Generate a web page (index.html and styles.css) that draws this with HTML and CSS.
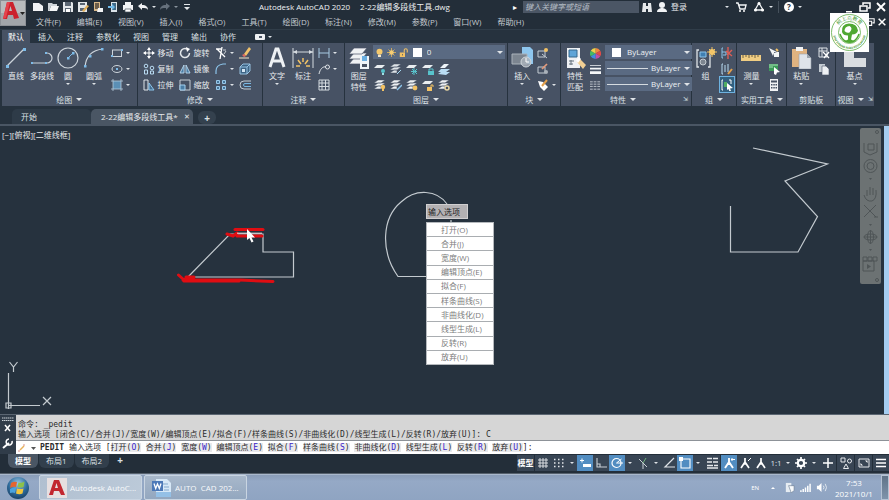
FILE: index.html
```html
<!DOCTYPE html>
<html lang="zh-CN">
<head>
<meta charset="utf-8">
<title>Autodesk AutoCAD 2020</title>
<link rel="stylesheet" href="styles.css">
</head>
<body>
<header class="top">
  <button class="app" aria-label="应用程序菜单">
    <svg width="26" height="26" viewBox="0 0 26 26"><rect width="26" height="26" fill="#8d9196"/><rect x="1" y="1" width="24" height="12" fill="#b9bcbe"/><rect x="1" y="13" width="24" height="12" fill="#a2a6aa"/><path fill-rule="evenodd" d="M3 19L7 2h6l6 16-5 1-1-4H8l-1 4zM9 11h3l-1.500-5z" fill="#cb222d"/><path d="M3 19L7 2h3L6 18z" fill="#e5434d"/><path d="M20 12h5l-2.500 3z" fill="#222"/></svg>
  </button>
  <div class="bars">
    <div class="title-bar">
      <div class="qat">
        <button aria-label="新建"><svg viewBox="0 0 12 12"><path d="M1 2h6l4 3v5H1z" fill="#f1f3f5"/></svg></button>
        <button aria-label="打开"><svg viewBox="0 0 12 12"><path d="M1 2h4l1 1h4v2H4l-2 5H1z" fill="#cfd5da"/><path d="M4 5h8l-2 5H2z" fill="#f4f6f7"/></svg></button>
        <button aria-label="保存"><svg viewBox="0 0 12 12"><path d="M1 1h9l1 1v9H1z" fill="#e3e7ea"/><path d="M3 1h6v4H3zM3 7h6v4H3z" fill="#5a6673"/><path d="M4 8h4v3H4z" fill="#fff"/></svg></button>
        <button aria-label="另存为"><svg viewBox="0 0 12 12"><path d="M1 1h9v10H1z" fill="#e3e7ea"/><path d="M3 2h5v2H3zM3 7h5v3H3z" fill="#5a6673"/><path d="M5 10l5-6 2 1-5 6z" fill="#e2b15c"/></svg></button>
        <button aria-label="从移动设备打开"><svg viewBox="0 0 12 12"><path d="M2 1h6v9H2z" fill="#d9b98a"/><path d="M3 2h4v6H3z" fill="#6c5d4a"/><path d="M6 7h5v4H5z" fill="#f1f3f5"/></svg></button>
        <button aria-label="保存到移动设备"><svg viewBox="0 0 12 12"><path d="M4 1h6v10H4z" fill="#dbe4ea"/><path d="M5 2h4v7H5z" fill="#3f6a88"/><path d="M1 5h4V3l3 3-3 3V7H1z" fill="#6fb9e8"/></svg></button>
        <button aria-label="打印"><svg viewBox="0 0 12 12"><path d="M3 1h6v3H3zM1 4h10v5H1z" fill="#f1f3f5"/><path d="M3 8h6v3H3z" fill="#fff" stroke="#47545f" stroke-width=".7"/></svg></button>
        <button aria-label="放弃"><svg viewBox="0 0 12 12"><path d="M1 5l4-3v2c4 0 6 2 6 5-1-2-3-2-6-2v2z" fill="#f1f3f5"/></svg></button>
        <i class="dd"></i>
        <button aria-label="重做"><svg viewBox="0 0 12 12"><path d="M11 5L7 2v2C3 4 1 6 1 9c1-2 3-2 6-2v2z" fill="#66717d"/></svg></button>
        <i class="dd dim"></i>
        <button aria-label="自定义快速访问"><svg viewBox="0 0 12 12"><path d="M3 3h6v1H3zM3 6h6L6 9z" fill="#e1e5e8"/></svg></button>
      </div>
      <h1><span>Autodesk AutoCAD 2020</span><span>2-22编辑多段线工具.dwg</span></h1>
      <span class="tri">▸</span>
      <input class="search" type="search" aria-label="搜索" placeholder="键入关键字或短语">
      <button class="login-icon" aria-label="查找"><svg viewBox="0 0 12 12"><path d="M2 2h3v3h2V2h3l1 9H7V8H5v3H1z" fill="#e6e9eb"/></svg></button>
      <button class="login"><svg viewBox="0 0 12 12"><circle cx="6" cy="4" r="3" fill="#f1f3f5"/><path d="M1 11c0-3 3-4 5-4s5 1 5 4z" fill="#f1f3f5"/></svg>登录</button>
      <div class="links">
        <i class="dd"></i>
        <button aria-label="应用商店"><svg viewBox="0 0 12 12"><path d="M1 2h2l2 6h5l1-4H4" fill="none" stroke="#f1f3f5" stroke-width="1.400"/><circle cx="5" cy="10" r="1" fill="#fff"/><circle cx="9" cy="10" r="1" fill="#fff"/></svg></button>
        <button aria-label="共享"><svg viewBox="0 0 12 12"><path d="M6 2l4 7H2z" fill="none" stroke="#f1f3f5" stroke-width="1.300"/><circle cx="6" cy="2.500" r="1.500" fill="#fff"/><circle cx="2.500" cy="9" r="1.500" fill="#fff"/><circle cx="9.500" cy="9" r="1.500" fill="#fff"/></svg></button>
        <i class="dd"></i><i class="bar"></i>
        <button class="help" aria-label="帮助">?</button>
        <i class="dd"></i>
      </div>
      <div class="win">
        <button aria-label="最小化"><svg viewBox="0 0 12 12"><path d="M3 10h6v1.500H3z" fill="#fff"/></svg></button>
        <button aria-label="还原"><svg viewBox="0 0 12 12"><path d="M4 4V2h7v5H9M1 5h7v5H1z" fill="none" stroke="#fff" stroke-width="1.500"/></svg></button>
        <button aria-label="关闭"><svg viewBox="0 0 12 12"><path d="M2 2l8 8M10 2l-8 8" stroke="#fff" stroke-width="1.900"/></svg></button>
      </div>
    </div>
    <nav class="menu">
      <a href="#">文件(F)</a><a href="#">编辑(E)</a><a href="#">视图(V)</a><a href="#">插入(I)</a><a href="#">格式(O)</a><a href="#">工具(T)</a><a href="#">绘图(D)</a><a href="#">标注(N)</a><a href="#">修改(M)</a><a href="#">参数(P)</a><a href="#">窗口(W)</a><a href="#">帮助(H)</a>
      <div class="mdi">
        <button aria-label="还原图形"><svg viewBox="0 0 12 12"><path d="M4 4V2h7v5H9M1 5h7v5H1z" fill="none" stroke="#fff" stroke-width="1.300"/></svg></button>
        <button aria-label="关闭图形"><svg viewBox="0 0 12 12"><path d="M2 2l8 8M10 2l-8 8" stroke="#fff" stroke-width="1.800"/></svg></button>
      </div>
    </nav>
  </div>
</header>

<nav class="tabs">
  <a href="#" class="on">默认</a><a href="#">插入</a><a href="#">注释</a><a href="#">参数化</a><a href="#">视图</a><a href="#">管理</a><a href="#">输出</a><a href="#">协作</a>
  <button aria-label="功能区显示"><svg width="10" height="8" viewBox="0 0 10 8"><rect y="1" width="10" height="6" rx="1" fill="#eef0f2"/><rect x="4" y="3" width="3" height="2" fill="#4a5565"/></svg><i class="dd"></i></button>
</nav>

<main>
<section class="ribbon">
  <div class="panel">
    <div class="body">
      <button class="big"><svg viewBox="0 0 22 22"><path d="M2 19L19 2" stroke="#ccd3da" stroke-width="1.200"/><path d="M1 18h3v3H1zM18 1h3v3h-3z" fill="#7dbbe8"/></svg>直线</button>
      <button class="big"><svg viewBox="0 0 22 22"><path d="M1 16h15a5 5 0 0 0 0-10h-1" fill="none" stroke="#ccd3da" stroke-width="1.200"/><path d="M0 15h2v2H0zM14 15h2v2h-2zM14 5h2v2h-2z" fill="#7dbbe8"/></svg>多段线</button>
      <button class="big"><svg viewBox="0 0 22 22"><circle cx="11" cy="11" r="10" fill="none" stroke="#ccd3da" stroke-width="1.200"/><path d="M11 11l5-5" stroke="#7dbbe8"/><path d="M10 10h2.500v2.500H10zM15 5h2.500v2.500H15z" fill="#7dbbe8"/></svg>圆<i class="dd"></i></button>
      <button class="big"><svg viewBox="0 0 22 22"><path d="M2 20C3 9 9 3 20 2" fill="none" stroke="#ccd3da" stroke-width="1.200"/><path d="M1 18h2.500v2.500H1zM6 8h2.500v2.500H6zM18 1h2.500v2.500H18z" fill="#7dbbe8"/></svg>圆弧<i class="dd"></i></button>
      <div class="col">
        <button class="sm"><svg viewBox="0 0 12 12"><rect x="1.500" y="3" width="9" height="6.500" fill="none" stroke="#ccd3da"/><path d="M0 8h2v2H0zM10 2h2v2h-2z" fill="#7dbbe8"/></svg><i class="dd"></i></button>
        <button class="sm"><svg viewBox="0 0 12 12"><ellipse cx="6" cy="6" rx="5" ry="3.500" fill="none" stroke="#ccd3da"/><path d="M5 5h2v2H5z" fill="#7dbbe8"/></svg><i class="dd"></i></button>
        <button class="sm"><svg viewBox="0 0 12 12"><path d="M2 2h8v8H2z" fill="#5b8fb5"/><path d="M2 0v12M10 0v12M0 2h12M0 10h12" stroke="#b6cbdc" stroke-width=".8"/></svg><i class="dd"></i></button>
      </div>
    </div>
    <button class="label">绘图<i class="dd w"></i></button>
  </div>
  <div class="panel">
    <div class="body">
      <div class="col">
        <button class="sm"><svg viewBox="0 0 12 12"><path d="M6 1v10M1 6h10" stroke="#fff"/><path d="M6 0l2 3H4zM6 12l2-3H4zM0 6l3-2v4zM12 6L9 4v4z" fill="#fff"/></svg>移动</button>
        <button class="sm"><svg viewBox="0 0 12 12"><g fill="none" stroke="#b9dbf2"><circle cx="3" cy="3" r="1.800"/><circle cx="9" cy="5" r="1.800"/><path d="M1.500 7h3v4h-3zM7.500 8h3v3h-3z"/></g></svg>复制</button>
        <button class="sm"><svg viewBox="0 0 12 12"><path d="M1 1h4v10H1z" fill="none" stroke="#dfe4e8"/><path d="M6 4l5 7H6z" fill="#446e90" stroke="#8cc4ea"/></svg>拉伸</button>
      </div>
      <div class="col">
        <button class="sm"><svg viewBox="0 0 12 12"><path d="M8 2a4.500 4.500 0 1 0 2.500 4" fill="none" stroke="#e3e7ea" stroke-width="1.500"/><path d="M7 0l4 2-3 3z" fill="#fff"/></svg>旋转</button>
        <button class="sm"><svg viewBox="0 0 12 12"><path d="M5 2v8H1zM7 2v8h4z" fill="#4b7ea5" stroke="#bcd9ee" stroke-width=".9"/></svg>镜像</button>
        <button class="sm"><svg viewBox="0 0 12 12"><path d="M1 1h10v10H1z" fill="none" stroke="#c5ccd3"/><path d="M1 6h5v5H1z" fill="#4b7ea5" stroke="#a4d0ef"/></svg>缩放</button>
      </div>
      <div class="col">
        <button class="sm"><svg viewBox="0 0 12 12"><path d="M1 2h5M7 0L5 12M2 2l8 8" stroke="#fff" stroke-width="1.300"/><path d="M8 3h3M9 7l2-3" stroke="#c9ced3"/></svg><i class="dd"></i></button>
        <button class="sm"><svg viewBox="0 0 12 12"><path d="M1 11V8q0-6 7-7h3" fill="none" stroke="#8cc4ea" stroke-width="1.200"/></svg><i class="dd"></i></button>
        <button class="sm"><svg viewBox="0 0 12 12"><path d="M1.500 1.500h3v3h-3zM7.500 1.500h3v3h-3zM1.500 7.500h3v3h-3zM7.500 7.500h3v3h-3z" fill="#47769b" stroke="#98c9eb"/></svg><i class="dd"></i></button>
      </div>
      <div class="col">
        <button class="sm"><svg viewBox="0 0 12 12"><path d="M5 7l5-7 2 2-5 7z" fill="#f0c26a"/><path d="M3 8l2-1 2 2-2 1z" fill="#e46a5f"/><path d="M0 11h10" stroke="#f4e6c8"/></svg></button>
        <button class="sm"><svg viewBox="0 0 12 12"><path d="M1 4h7v7H1zM1 4l3-3h7v7l-3 3M8 4l3-3" fill="#3d6485" stroke="#a0cdec" stroke-width=".9"/><path d="M3 6h3v3H3z" fill="#d4e6f4"/></svg></button>
        <button class="sm"><svg viewBox="0 0 12 12"><path d="M12 2H5a4 4 0 0 0 0 8h7" fill="none" stroke="#c3cbd3"/><path d="M12 4.500H6a1.500 1.500 0 0 0 0 3h6" fill="none" stroke="#79b8e4"/></svg></button>
      </div>
    </div>
    <button class="label">修改<i class="dd w"></i></button>
  </div>
  <div class="panel">
    <div class="body">
      <button class="big"><svg viewBox="0 0 22 22"><path d="M4 20L10 2h2l6 18M6 14h10" fill="none" stroke="#eef1f4" stroke-width="3"/></svg>文字<i class="dd"></i></button>
      <button class="big"><svg viewBox="0 0 22 22"><path d="M1 1v20M21 1v20M1 5h20" stroke="#d5dbe0" fill="none"/><path d="M1 5l4-2v4zM21 5l-4-2v4z" fill="#d5dbe0"/><path d="M11 11v4M6 13l3 4M16 13l-3 4M4 19h4M14 19h4" stroke="#f1c266" stroke-width="1.500"/></svg>标注</button>
      <div class="col near">
        <button class="sm"><svg viewBox="0 0 12 12"><path d="M1 1v10M11 1v10M1 6h10" stroke="#a9cbe4"/></svg><i class="dd"></i></button>
        <button class="sm"><svg viewBox="0 0 12 12"><path d="M1 11c1-5 4-8 7-7" fill="none" stroke="#dfe3e7"/><circle cx="9.500" cy="4" r="2" fill="none" stroke="#dfe3e7"/></svg><i class="dd"></i></button>
        <button class="sm"><svg viewBox="0 0 12 12"><path d="M1 1h10v10H1zM1 4h10M1 7.500h10M4 1v10M7.500 1v10" fill="none" stroke="#d5dbe0"/></svg></button>
      </div>
    </div>
    <button class="label">注释<i class="dd w"></i></button>
  </div>
  <div class="panel">
    <div class="body">
      <button class="big two"><svg viewBox="0 0 22 22"><g fill="#f0f2f4" stroke="#475264" stroke-width=".7"><path d="M1 17l5-6h13l-5 6z"/><path d="M1 12l5-6h13l-5 6z"/><path d="M1 7l5-6h13l-5 6z"/></g><path d="M12 9h9v13h-9z" fill="#eef4f9"/><path d="M14 9h5v5h-5z" fill="#6aaee0"/><path d="M14 17h5v3h-5z" fill="#475264"/></svg>图层<br>特性</button>
      <div class="stack">
        <div class="combo">
          <svg viewBox="0 0 12 12"><circle cx="6" cy="5" r="4" fill="#f4c86c"/><path d="M4 9h4v3H4z" fill="#f4e6c8"/></svg>
          <svg viewBox="0 0 12 12"><path d="M6 0v12M0 6h12M2 2l8 8M10 2l-8 8" stroke="#eebc5a"/><circle cx="6" cy="6" r="3" fill="#f6cd73"/></svg>
          <svg viewBox="0 0 12 12"><path d="M1 6h7v6H1z" fill="#f2c265"/><path d="M7 6V3a2 2 0 0 1 4 0v3" fill="none" stroke="#f2c265" stroke-width="1.400"/><path d="M4 8h1v2H4z" fill="#475264"/></svg>
          <i class="swatch"></i>
          <select aria-label="图层"><option>0</option></select><i class="dd w"></i>
        </div>
        <div class="icons">
          <button aria-label="关"><svg viewBox="0 0 12 12"><path d="M0 5l3-3h8L8 5z" fill="#e9edf0"/><circle cx="9" cy="8" r="2" fill="#58c3cc"/><path d="M8 10h2v2H8z" fill="#9fe0e5"/></svg></button>
          <button aria-label="隔离"><svg viewBox="0 0 12 12"><path d="M0 4l4-3h7L7 4zM0 7l4-3h7L7 7zM0 10l4-3h3v3z" fill="#dfe4e8" stroke="#475264" stroke-width=".5"/><path d="M7 11l4-4" stroke="#a5d7f0"/></svg></button>
          <button aria-label="冻结"><svg viewBox="0 0 12 12"><path d="M0 5l3-3h8L8 5z" fill="#e9edf0"/><path d="M8 5v7M5 8.500h6M6 6l5 5M11 6l-5 5" stroke="#58c3cc"/></svg></button>
          <button aria-label="锁定"><svg viewBox="0 0 12 12"><path d="M0 5l3-3h8L8 5z" fill="#e9edf0"/><path d="M6 8h6v4H6z" fill="#58c3cc"/><path d="M7 8V6h4v2" fill="none" stroke="#58c3cc"/></svg></button>
          <button aria-label="置为当前"><svg viewBox="0 0 12 12"><path d="M0 9l3-3h9L8 9zM0 11l3-2h9l-4 3z" fill="#b9dcf3"/><path d="M2 5l4-4h5L7 5z" fill="#eef4f9"/></svg></button>
        </div>
        <div class="icons">
          <button aria-label="打开所有"><svg viewBox="0 0 12 12"><path d="M0 4l4-3h7L7 4zM0 7l4-3h7L7 7zM0 10l4-3h3v3z" fill="#eef1f4" stroke="#475264" stroke-width=".5"/><circle cx="9" cy="8" r="2.200" fill="#f2c265"/><path d="M8 10h2v2H8z" fill="#f2c265"/></svg></button>
          <button aria-label="取消隔离"><svg viewBox="0 0 12 12"><path d="M0 4l4-3h7L7 4zM0 7l4-3h7L7 7zM0 10l4-3h3v3z" fill="#eef1f4" stroke="#475264" stroke-width=".5"/><path d="M7 11l5-5" stroke="#8cc4ea" stroke-width="1.500"/></svg></button>
          <button aria-label="解冻"><svg viewBox="0 0 12 12"><path d="M0 4l4-3h7L7 4zM0 7l4-3h7L7 7zM0 10l4-3h3v3z" fill="#eef1f4" stroke="#475264" stroke-width=".5"/><circle cx="9" cy="9" r="2.400" fill="#f2c265"/></svg></button>
          <button aria-label="解锁"><svg viewBox="0 0 12 12"><path d="M0 5l3-3h8L8 5z" fill="#e9edf0"/><path d="M5 8h5v4H5z" fill="#f2c265"/><path d="M9 8V6h2v2" fill="none" stroke="#f2c265"/></svg></button>
          <button aria-label="匹配图层"><svg viewBox="0 0 12 12"><path d="M0 4l4-3h7L7 4zM0 7l4-3h7L7 7zM0 10l4-3h3v3z" fill="#eef1f4" stroke="#475264" stroke-width=".5"/><circle cx="9" cy="9" r="2" fill="none" stroke="#e9d7a5" stroke-width="1.500"/></svg></button>
        </div>
      </div>
    </div>
    <button class="label">图层<i class="dd w"></i></button>
  </div>
  <div class="panel">
    <div class="body">
      <button class="big"><svg viewBox="0 0 22 22"><path d="M11 0h8l3 3v14H11z" fill="#8ec6ee"/><path d="M1 7h15v10H1z" fill="#7c8590" stroke="#aab2ba"/><circle cx="15" cy="15" r="5" fill="#aab2ba" fill-opacity=".8" stroke="#d0d6db"/><path d="M15 11v4h3" stroke="#fff" fill="none"/></svg>插入<i class="dd"></i></button>
      <div class="col near">
        <button class="sm"><svg viewBox="0 0 12 12"><path d="M1 4h7v6H1zM5 7l5 4" fill="none" stroke="#c5ccd3"/><circle cx="9" cy="3" r="2" fill="#f2c265"/></svg></button>
        <button class="sm"><svg viewBox="0 0 12 12"><path d="M1 4h7v6H1z" fill="none" stroke="#c5ccd3"/><circle cx="9" cy="9" r="2" fill="#aab2ba"/><path d="M5 6l5-5" stroke="#e29a7c" stroke-width="1.700"/></svg></button>
        <button class="sm"><svg viewBox="0 0 12 12"><path d="M1 2l2 6 4 4 4-4-5-5z" fill="#fff"/><path d="M5 7l5-6" stroke="#e2a04c" stroke-width="2"/></svg><i class="dd"></i></button>
      </div>
    </div>
    <button class="label">块<i class="dd w"></i></button>
  </div>
  <div class="panel">
    <div class="body">
      <button class="big two"><svg viewBox="0 0 22 22"><path d="M3 1h13v20H3z" fill="#eef1f4"/><path d="M5 3h8v7H5z" fill="#5fa5d8" stroke="#37688d"/><path d="M5 14h5M5 17h4M7 13v5" stroke="#62707d"/><path d="M13 15l3-3 6 6-3 4z" fill="#f1cf93"/><path d="M12 13l3-3 2 2-3 4z" fill="#fff"/></svg>特性<br>匹配</button>
      <div class="col props">
        <svg viewBox="0 0 12 12"><path d="M6 6V0A6 6 0 0 1 11.200 3z" fill="#f0883e"/><path d="M6 6l5.200-3a6 6 0 0 1 0 6z" fill="#e04b48"/><path d="M6 6l5.200 3A6 6 0 0 1 6 12z" fill="#c04fa8"/><path d="M6 6v6A6 6 0 0 1 .8 9z" fill="#3f8ee0"/><path d="M6 6L.8 9a6 6 0 0 1 0-6z" fill="#46b864"/><path d="M6 6L.8 3A6 6 0 0 1 6 0z" fill="#ecd24b"/></svg>
        <svg viewBox="0 0 12 12"><path d="M0 1h12v1H0zM0 4h12v2H0zM0 8h12v3H0z" fill="#f4f6f7"/></svg>
        <svg viewBox="0 0 12 12"><path d="M0 2h12M0 4.500h12M0 7h12M0 10h12" stroke="#c5ccd3" stroke-dasharray="3 1"/></svg>
      </div>
      <div class="stack">
        <div class="combo"><i class="swatch in"></i><select aria-label="颜色"><option>ByLayer</option></select><i class="dd w"></i></div>
        <div class="combo"><i class="rule"></i><select aria-label="线宽"><option>ByLayer</option></select><i class="dd w"></i></div>
        <div class="combo"><i class="rule"></i><select aria-label="线型"><option>ByLayer</option></select><i class="dd w"></i></div>
      </div>
    </div>
    <button class="label end">特性<i class="dd w"></i><span class="launch">⇲</span></button>
  </div>
  <div class="panel">
    <div class="body">
      <button class="big"><svg viewBox="0 0 22 22"><path d="M4 3H2v17h2M15 8v12h-2" fill="none" stroke="#dfe3e7" stroke-width="1.300"/><path d="M5 5h6v5H5z" fill="#3f7fb2" stroke="#8cc4ea"/><circle cx="8" cy="15" r="3" fill="#7c8590" stroke="#c5ccd3"/><circle cx="17" cy="5" r="3" fill="#f6cd73"/><path d="M17 0v10M12 5h10M14 2l6 6M20 2l-6 6" stroke="#f2c265"/></svg>组</button>
      <div class="col near">
        <button class="sm"><svg viewBox="0 0 12 12"><path d="M2 1H1v10h1M1 5h4v3H2" stroke="#8cc4ea" fill="none"/><path d="M7 0v12M5 4l6 5M11 3L6 8" stroke="#dd5d55" stroke-width="1.400"/></svg></button>
        <button class="sm"><svg viewBox="0 0 12 12"><path d="M2 1H1v10h1M4 2v7M7 1v8" stroke="#b9dbf2" fill="none"/><path d="M7 11l4-5" stroke="#e2a04c" stroke-width="2"/></svg></button>
        <button class="sm sel"><svg viewBox="0 0 12 12"><path d="M2 1H1v10h1M8 1h2v4" stroke="#fff" fill="none"/><path d="M3 3h3v5H3z" fill="#4fae62"/><path d="M6 4l6 5-3 .500 1 2.500-1.500.500L7.500 10 6 11z" fill="#fff"/></svg></button>
      </div>
    </div>
    <button class="label">组<i class="dd w"></i></button>
  </div>
  <div class="panel">
    <div class="body">
      <button class="big"><svg viewBox="0 0 22 22"><path d="M1 8h20v6H1z" fill="#f0cd83"/><path d="M3 8v3M6 8v2M9 8v3M12 8v2M15 8v3M18 8v2" stroke="#6e6040"/></svg>测量<i class="dd"></i></button>
      <div class="col">
        <button class="sm"><svg viewBox="0 0 12 12"><path d="M1 1l4 8 1-3 3-1zM6 5h5v5H6z" fill="#f4f6f7"/><path d="M8 2l2 2" stroke="#f2c265" stroke-width="2"/></svg></button>
        <button class="sm"><svg viewBox="0 0 12 12"><path d="M1 1h9v7H1z" fill="#3c9a58"/><path d="M1 2h9M1 4h4" stroke="#a5e0b4"/><path d="M6 4l6 5-3 .500L8 12 6 11z" fill="#fff"/></svg></button>
        <button class="sm"><svg viewBox="0 0 12 12"><path d="M2 0h8v12H2z" fill="#f1f3f5"/><path d="M3 1.500h6v2H3zM3 5h1.500v1.500H3zM5.300 5h1.500v1.500H5.300zM7.500 5H9v1.500H7.500zM3 8h1.500v1.500H3zM5.300 8h1.500v1.500H5.300zM7.500 8H9v1.500H7.500z" fill="#475264"/></svg></button>
      </div>
    </div>
    <button class="label">实用工具<i class="dd w"></i></button>
  </div>
  <div class="panel">
    <div class="body">
      <button class="big"><svg viewBox="0 0 22 22"><path d="M2 2h15v18H2z" fill="#e0b380"/><path d="M6 0h7v4H6z" fill="#f1f3f5"/><path d="M9 7h8l4 4v11H9z" fill="#dfe4ea" stroke="#9aa3ad" stroke-width=".6"/><path d="M17 7v4h4z" fill="#9aa3ad"/></svg>粘贴<i class="dd"></i></button>
      <div class="col">
        <button class="sm"><svg viewBox="0 0 12 12"><path d="M1 1h8v9H1zM1 4h8M4 1v9" fill="none" stroke="#dfe3e7"/><path d="M5 5l6 6M11 5l-5 6" stroke="#fff" stroke-width="1.300"/></svg></button>
        <button class="sm"><svg viewBox="0 0 12 12"><path d="M1 1h6v8H1z" fill="#c5ccd3"/><path d="M4 3h4l3 3v6H4z" fill="#eef1f4" stroke="#475264" stroke-width=".6"/></svg></button>
      </div>
    </div>
    <button class="label">剪贴板</button>
  </div>
  <div class="panel">
    <div class="body mid">
      <button class="big"><svg viewBox="0 0 22 22"><path d="M0 0h10v11h12v9H0z" fill="#dadde1"/></svg>基点<i class="dd"></i></button>
    </div>
    <button class="label">视图<i class="dd w"></i><span class="launch">⇲</span></button>
  </div>
</section>

<div class="files">
  <a href="#">开始</a>
  <a href="#" class="on">2-22编辑多段线工具*<span class="x">✕</span></a>
  <button aria-label="新图形">+</button>
</div>

<section class="canvas">
  <span class="view">[−][俯视][二维线框]</span>
  <svg class="drawing" viewBox="0 0 884 288" preserveAspectRatio="xMinYMin meet">
    <g fill="none" stroke="#c3cacf" stroke-width="1.200">
      <path d="M188 151L230 108H263V126H293.500V151Z"/>
      <path d="M426 150.500H398C380 125 382 92 401 76C416 62 437 64 447 78M451 94v3"/>
      <path d="M753 22L827.500 38L785 55L817.500 90.500L798 126H730.500V80"/>
      <path d="M8.500 247v36M8.500 279.500H40M6 277h5v5H6z"/>
      <path d="M9.500 236l4 5 4-5M13.500 241v5M43 271l8 8M51 271l-8 8"/>
    </g>
    <g fill="none" stroke="#e00d12" stroke-linecap="round">
      <path d="M235 103.500H263" stroke-width="3"/><path d="M227 108l6 2 4-3M237 110H262" stroke-width="3"/>
      <path d="M178.500 149l5 4.500 10-2M183 154H240L273 155.500" stroke-width="3"/><path d="M186 151h8M184 155h55" stroke-width="3"/>
    </g>
    <path d="M237 107.200h25" stroke="#f1e4e4" stroke-width="1"/>
    <path d="M247 103v11l2.500-2 2 4.500 2-1-2-4h3.500z" fill="#fff"/>
  </svg>
  <div class="prompt">输入选项</div>
  <ul class="popup">
    <li><button>打开(O)</button></li><li><button>合并(J)</button></li><li><button>宽度(W)</button></li><li><button>编辑顶点(E)</button></li><li><button>拟合(F)</button></li><li><button>样条曲线(S)</button></li><li><button>非曲线化(D)</button></li><li><button>线型生成(L)</button></li><li><button>反转(R)</button></li><li><button>放弃(U)</button></li>
  </ul>
  <div class="navbar">
    <svg viewBox="0 0 21 156"><g fill="none" stroke="#4f5557" stroke-width="1"><circle cx="17" cy="4" r="1.500"/><path d="M4 15v9l6 3 7-3v-9M8 16h6v6H8z"/><circle cx="10.500" cy="38" r="6.500"/><circle cx="10.500" cy="38" r="3.500"/><path d="M4 67q2 7 8 6 5-2 4-11M7 68v-6M10 67v-8M13 67v-7"/><path d="M4 77l12 12M16 77L4 89M14 89h4"/><path d="M10.500 102v14M4 109h13"/><ellipse cx="10.500" cy="109" rx="6.500" ry="3"/><ellipse cx="10.500" cy="109" rx="3" ry="6.500"/><path d="M3 129h4v4H3zM8 129h4v4H8zM13 129h4v4h-4zM3 133h11v10H3z"/><circle cx="17" cy="152" r="1.500"/></g><path d="M7 136l4 2.500-4 2.500zM9 50h3l-1.500 2zM9 96h3l-1.500 2zM9 121h3l-1.500 2z" fill="#4f5557"/></svg>
  </div>
</section>
</main>

<section class="cmd">
  <div class="grip">
    <svg viewBox="0 0 16 38"><path d="M2 3h12M2 5.500h12" stroke="#c9d0d6" stroke-dasharray="1.500 .5"/><path d="M5 10l5 6M10 10l-5 6" stroke="#fff" stroke-width="1.500"/><path d="M3 33l6-5" stroke="#fff" stroke-width="2"/><path d="M12 26a3 3 0 1 1-3-2" fill="none" stroke="#fff" stroke-width="1.600"/></svg>
  </div>
  <div class="console">
    <div class="history"><p>命令: _pedit</p><p>输入选项 [闭合(C)/合并(J)/宽度(W)/编辑顶点(E)/拟合(F)/样条曲线(S)/非曲线化(D)/线型生成(L)/反转(R)/放弃(U)]: C</p></div>
    <label class="entry"><svg viewBox="0 0 22 12"><path d="M4 8l4-4" stroke="#e8b25a" stroke-width="1.500"/><path d="M2 9h2M7 3l2 0" stroke="#d9928a"/><path d="M15 5h5l-2.500 3z" fill="#555"/></svg><span><b>PEDIT</b> 输入选项 [<a href="#">打开(<em>O</em>)</a> <a href="#">合并(<em>J</em>)</a> <a href="#">宽度(<em>W</em>)</a> <a href="#">编辑顶点(<em>E</em>)</a> <a href="#">拟合(<em>F</em>)</a> <a href="#">样条曲线(<em>S</em>)</a> <a href="#">非曲线化(<em>D</em>)</a> <a href="#">线型生成(<em>L</em>)</a> <a href="#">反转(<em>R</em>)</a> <a href="#">放弃(<em>U</em>)</a>]:</span><input type="text" aria-label="命令行"></label>
  </div>
</section>

<footer>
  <div class="status">
    <nav class="layouts"><a href="#" class="on">模型</a><a href="#">布局1</a><a href="#">布局2</a><a href="#" class="add">+</a></nav>
    <div class="toggles">
      <button class="wide txt">模型</button>
      <button aria-label="栅格"><svg viewBox="0 0 12 12"><path d="M3 1v10M6 1v10M9 1v10M1 3h10M1 6h10M1 9h10" stroke="#e6e9ec" stroke-width=".9"/></svg></button>
      <button aria-label="捕捉"><svg viewBox="0 0 12 12"><path d="M1 2.500h10M1 6h10M1 9.500h10" stroke="#e6e9ec" stroke-width="1.500" stroke-dasharray="1.500 2.500"/></svg></button>
      <i class="cell"><i class="dd"></i></i>
      <button class="hl" aria-label="动态输入"><svg viewBox="0 0 12 12"><path d="M1 3.500h4M3 1.500v4" stroke="#fff"/><path d="M4 7h8v3H4z" fill="#fff"/></svg></button>
      <button aria-label="正交"><svg viewBox="0 0 12 12"><path d="M2 1v9h10M2 7h3v3" fill="none" stroke="#c9d0d6" stroke-width="1.100"/></svg></button>
      <button class="hl" aria-label="极轴"><svg viewBox="0 0 12 12"><circle cx="5.500" cy="6" r="4.500" fill="none" stroke="#fff" stroke-width="1.200"/><path d="M5.500 6H12M5.500 6l5-4" stroke="#fff"/></svg></button>
      <i class="cell"><i class="dd"></i></i>
      <button aria-label="等轴测"><svg viewBox="0 0 12 12"><path d="M2 2l8 8" stroke="#c9d0d6"/><path d="M6 6v6" stroke="#c9d0d6"/><path d="M6 6l3-5" stroke="#6fb07c"/></svg></button>
      <i class="cell"><i class="dd"></i></i>
      <button aria-label="追踪"><svg viewBox="0 0 12 12"><path d="M11 1L2 10h10" fill="none" stroke="#dfe3e7" stroke-width="1.200"/></svg></button>
      <button class="hl" aria-label="对象捕捉"><svg viewBox="0 0 12 12"><path d="M2 2h9v9H2z" fill="none" stroke="#fff" stroke-width="1.100"/><path d="M0 0h4v4H0z" fill="#fff"/></svg></button>
      <i class="cell"><i class="dd"></i></i>
      <button class="wide" aria-label="线宽显示"><svg viewBox="0 0 12 12"><path d="M1 1.500h5M7 1.500h5M1 5h5M7 5h5M1 8.500h6M8 8.500h4M1 11h11" stroke="#e6e9ec" stroke-width="1.500"/></svg></button>
      <button class="hl" aria-label="注释可见"><svg viewBox="0 0 12 12"><path d="M6 1v5M6 5l-4 6M6 5l4 6M4 7h4" stroke="#fff" stroke-width="1.900"/><path d="M9 1v3M8 2.500h4" stroke="#fff"/></svg></button>
      <button aria-label="自动缩放"><svg viewBox="0 0 12 12"><path d="M6 1v5M6 5l-4 6M6 5l4 6M4 7h4" stroke="#fff" stroke-width="1.700"/><path d="M9 4l3-3" stroke="#fff"/></svg></button>
      <button aria-label="注释比例"><svg viewBox="0 0 12 12"><path d="M6 1v5M6 5l-4 6M6 5l4 6M4 7h4" stroke="#fff" stroke-width="1.700"/></svg></button>
      <button class="ratio">1:1</button>
      <i class="cell"><i class="dd"></i></i>
      <button aria-label="工作空间"><svg viewBox="0 0 12 12"><circle cx="6" cy="6" r="3.200" fill="none" stroke="#fff" stroke-width="2.200"/><path d="M6 0v2.500M6 9.500V12M0 6h2.500M9.500 6H12M2 2l1.500 1.500M8.500 8.500L10 10M10 2L8.500 3.500M3.500 8.500L2 10" stroke="#fff" stroke-width="1.700"/></svg></button>
      <i class="cell"><i class="dd"></i></i>
      <button class="wide" aria-label="注释监视器"><svg viewBox="0 0 12 12"><path d="M6 1v10M1 6h10" stroke="#fff" stroke-width="1.500"/></svg></button>
      <button class="wide" aria-label="隔离对象"><svg viewBox="0 0 12 12"><path d="M1 1h4v4H1zM6 7l2.500 4.500h-5z" fill="none" stroke="#e6e9ec"/><circle cx="9.500" cy="4" r="2" fill="none" stroke="#e6e9ec"/></svg></button>
      <button class="wide" aria-label="全屏显示"><svg viewBox="0 0 12 12"><path d="M1 2h10v8H1z" fill="none" stroke="#e6e9ec"/><path d="M7 3.500h2.500V6zM5 8.500H2.500V6z" fill="#fff"/></svg></button>
      <button aria-label="自定义"><svg viewBox="0 0 12 12"><path d="M1 2.500h10M1 6h10M1 9.500h10" stroke="#fff" stroke-width="1.500"/></svg></button>
    </div>
  </div>
  <div class="taskbar">
    <button class="start" aria-label="开始菜单"><svg viewBox="0 0 24 24"><defs><radialGradient id="orb" cx=".5" cy=".3" r=".7"><stop offset="0" stop-color="#9cc9e6"/><stop offset=".6" stop-color="#2f6c9c"/><stop offset="1" stop-color="#1b4267"/></radialGradient></defs><circle cx="12" cy="12" r="11" fill="url(#orb)"/><path d="M5 7q3-2 6-1l-1 5q-3-1-6 1z" fill="#e5652f"/><path d="M12.500 6.500q3 1 6-1l-1 5.500q-3 1-6 0z" fill="#8cc24a"/><path d="M4 13q3-2 6-1l-1 5q-2-1-5 0z" fill="#4ba3df"/><path d="M11 12.500q3 1 6.500 0l-1 5q-3 1.500-6.500 0z" fill="#f3c63c"/></svg></button>
    <button class="task on"><svg viewBox="0 0 20 20"><rect width="20" height="20" fill="#e6dfe0"/><path fill-rule="evenodd" d="M2 17L7 2h5l6 15h-4l-2-4H7l-1 4zM8 10h3L9.500 5z" fill="#c22630"/></svg>Autodesk AutoC...</button>
    <button class="task"><svg viewBox="0 0 20 20"><path d="M4 1h11l4 4v14H4z" fill="#d7e8f7"/><path d="M4 14h15v5H4z" fill="#94c0e6"/><path d="M7 6h9M12 9h5M12 12h5" stroke="#83a9cd"/><rect y="3" width="11" height="10" fill="#4d79b8"/><path d="M2 5.500l1.700 5L5.500 6l1.800 4.500L9 5.500" fill="none" stroke="#fff" stroke-width="1.300"/></svg>AUTO&nbsp; CAD 202...</button>
    <div class="tray">
      <span class="lang">EN</span>
      <i class="up"></i>
      <svg viewBox="0 0 12 12"><path d="M2 1h6v10H2z" fill="#e6ecf2"/><path d="M5 4h6v5l-3 3z" fill="#f8fafc" stroke="#6c7d93" stroke-width=".7"/></svg>
      <svg viewBox="0 0 12 12"><path d="M1 11V9M3.500 11V7.500M6 11V6M8.500 11V4M11 11V2" stroke="#fff" stroke-width="1.600"/></svg>
      <svg viewBox="0 0 12 12"><path d="M1 4h2l3-3v10L3 8H1z" fill="#fff"/><path d="M8 4q1.500 2 0 4M10 2q3 4 0 8" fill="none" stroke="#e6ecf2"/></svg>
      <time><span>7:53</span><span>2021/10/1</span></time>
      <button class="peek" aria-label="显示桌面"></button>
    </div>
  </div>
</footer>

<svg class="badge" viewBox="0 0 39 39">
  <defs><path id="arc-t" d="M6.500 19.500a13 13 0 0 1 26 0"/><path id="arc-b" d="M3 19.500a16.500 16.500 0 0 0 33 0"/></defs>
  <rect width="39" height="39" fill="#fff"/>
  <g fill="none" stroke="#5cab45" stroke-width=".8"><circle cx="19.500" cy="19.500" r="18"/><circle cx="19.500" cy="19.500" r="11"/></g>
  <path d="M12 19q-1-8 7-8.500 8 0 9 7-1 4-6 4l-1 5 4 2q-5 3-11 0l4-2v-4q-5 0-6-3.500z" fill="#4fa832"/>
  <path d="M14.500 18q0-4.500 5-5 4 2 0 6.500-3 1-5-1.500z" fill="#fff"/>
  <path d="M10 21q2 6 6 7.500M29 21q-2 6-6 7.500" fill="none" stroke="#4fa832" stroke-width="1.500"/>
  <text class="cn"><textPath href="#arc-t" startOffset="50%">树上鸟教育</textPath></text>
  <text class="en"><textPath href="#arc-b" startOffset="50%">SHU SHANG NIAO EDUCATION</textPath></text>
</svg>
</body>
</html>
```
FILE: styles.css
```css
* { box-sizing: border-box; }
body {
  margin: 0;
  min-height: 100vh;
  display: flex;
  flex-direction: column;
  background: #26323e;
  color: #dbe0e4;
  font: 8px/12px "Open Sans", "Noto Sans CJK SC", sans-serif;
  overflow: hidden;
}
button, input, select { font: inherit; color: inherit; background: none; border: 0; padding: 0; margin: 0; }
a { color: inherit; text-decoration: none; }
svg { display: block; flex: none; }
i { flex: none; }
.dd { display: block; border: 2px solid transparent; border-top-color: #dfe3e7; border-bottom: 0; width: 4px; }
.dd.w { border-width: 3px; border-bottom: 0; width: 6px; }
.dd.dim { border-top-color: #8a949e; }

/* title and menu bars */
.top { display: flex; background: #232e39; height: 29px; }
.app { width: 26px; height: 26px; }
.bars { flex: 1; min-width: 0; }
.title-bar { display: flex; align-items: center; height: 14px; }
.title-bar svg, .mdi svg { width: 12px; height: 12px; }
.qat { display: flex; align-items: center; gap: 3px; margin-left: 6px; width: 164px; }
h1 { display: flex; gap: 10px; justify-content: center; flex: 1; margin: 0; font: inherit; line-height: 14px; color: #eef1f3; white-space: nowrap; }
.tri { width: 10px; color: #fff; }
.search { width: 116px; height: 12px; background: #4b5665; font-style: italic; padding: 0 2px; color: #c1c8cf; }
.search::placeholder { color: #b4bcc4; opacity: 1; }
.login-icon { margin-left: 2px; }
.login { display: flex; align-items: center; gap: 3px; margin-left: 3px; color: #e6e9ec; }
.links { display: flex; align-items: center; gap: 4px; width: 110px; margin-left: 38px; }
.links svg { margin-left: 2px; }
.links .bar { width: 1px; height: 12px; background: #46515c; margin: 0 1px; }
.help { width: 10px; height: 10px; border-radius: 50%; background: #fff; color: #232e39; font-weight: bold; line-height: 10px; }
.win { display: flex; gap: 4px; margin: 0 2px 0 8px; }
.menu { display: flex; gap: 16px; padding-left: 10px; align-items: center; height: 16px; color: #c3cad0; white-space: nowrap; }
.mdi { display: flex; margin-left: auto; }
.mdi svg { width: 10px; height: 10px; margin-right: 2px; }

/* ribbon tabs */
.tabs { display: flex; padding-left: 2px; height: 14px; border-top: 1px solid #303d49; line-height: 13px; }
.tabs a { padding: 0 6px; }
.tabs .on { background: #475264; color: #fff; margin-right: 2px; }
.tabs a + a { margin-right: 1px; padding: 0 6px; }
.tabs button { display: flex; align-items: center; gap: 3px; margin-left: 12px; }
main { display: flex; flex-direction: column; flex: 1; min-height: 0; }

/* ribbon */
.ribbon { display: grid; grid-template-columns: 135fr 125fr 81fr 163fr 52fr 130fr 45fr 49fr 48fr 38fr; gap: 1px; padding: 0 15px 0 2px; background: #26323e; }
.panel { background: #475264; display: flex; flex-direction: column; min-width: 0; }
.body { display: flex; height: 50px; padding: 2px 2px 0 1px; }
.body.mid { justify-content: center; }
.label { display: flex; align-items: center; justify-content: center; gap: 4px; height: 13px; line-height: 13px; white-space: nowrap; }
.launch { font-size: 6px; }
.end .launch { margin-left: auto; }
.end > i { margin-right: 0; }
.end { padding: 0 3px 0 49px; }
.big { display: flex; flex-direction: column; align-items: center; width: 26px; padding-top: 2px; line-height: 12px; text-align: center; white-space: nowrap; flex: none; color: #e8ebee; }
.big svg { width: 22px; height: 22px; margin-bottom: 1px; }
.big .dd { margin-top: 1px; }
.big.two { display: block; align-self: flex-start; line-height: 11px; }
.big.two svg { margin: 0 auto 1px; }
.col { display: grid; grid-template-rows: repeat(3, 16px); margin-left: 3px; }
.col.near { margin-left: 1px; }
.sm { display: flex; align-items: center; gap: 3px; height: 15px; white-space: nowrap; padding: 0 1px; color: #e8ebee; }
.sm svg { width: 12px; height: 12px; }
.sm.sel { background: #33607f; outline: 1px solid #6db2e0; }
.props { width: 12px; margin-left: 2px; align-items: center; }
.props svg { width: 11px; height: 11px; }
.stack { flex: 1; min-width: 0; display: grid; grid-template-rows: repeat(3, 16px); margin-left: 1px; }
.props + .stack { margin-left: 3px; }
.combo { display: flex; align-items: center; gap: 3px; height: 14px; background: #5a6a82; padding: 0 2px; }
.combo svg { width: 9px; height: 9px; }
.combo select { appearance: none; flex: 1; min-width: 0; color: #eef1f4; height: 12px; line-height: 12px; }
.swatch { width: 9px; height: 9px; background: #fff; margin: 0 2px; }
.swatch.in { margin: 0 3px 0 5px; }
.rule { height: 1px; width: 41px; background: #d5dbe0; }
.icons { display: flex; gap: 4px; align-items: center; padding-left: 1px; }
.icons svg { width: 12px; height: 12px; }

/* file tabs */
.files { display: flex; align-items: flex-end; height: 20px; padding-left: 12px; border-bottom: 2px solid #4a5664; }
.files a { height: 15px; line-height: 15px; background: #2e3b48; border-radius: 5px 5px 0 0; padding: 0 9px; width: 79px; }
.files .on { background: #4a5664; width: 102px; display: flex; gap: 6px; padding-left: 10px; color: #e6e9ec; white-space: nowrap; }
.files .x { font-size: 7px; }
.files button { width: 18px; height: 13px; margin-left: 5px; border-radius: 6px; background: #34414e; font: bold 10px/12px "Open Sans", sans-serif; }

/* drawing area */
.canvas { position: relative; flex: 1; min-height: 280px; border-right: 5px solid #a5cdf0; background: #26323e; }
.drawing { width: 100%; height: 100%; }
.view { position: absolute; left: 2px; top: 3px; color: #e6e9ec; }
.prompt { position: absolute; left: 426px; top: 78px; width: 42px; height: 15px; line-height: 13px; padding-left: 1px; background: #b3b1b3; border: 1px solid #d0cfd0; color: #222; }
.popup { position: absolute; left: 426px; top: 96px; width: 68px; height: 143px; margin: 0; padding: 0; list-style: none; display: flex; flex-direction: column; background: #fff; border: 1px solid #b5b9bd; }
.popup li { flex: 1; display: flex; border-bottom: 1px solid #a9adb1; }
.popup li:last-child { border: 0; }
.popup button { flex: 1; text-align: left; padding-left: 14px; line-height: 12px; color: #7d7d7d; }
.navbar { position: absolute; right: 3px; top: 2px; width: 21px; background: #6c7273; border-radius: 2px; }

/* command line */
.cmd { display: flex; border-top: 1px solid #5b6672; font: 8px/12px "DejaVu Sans Mono", "Noto Sans CJK SC", monospace; color: #2b2b2b; }
.grip { width: 16px; background: #303c49; }
.console { flex: 1; min-width: 0; white-space: nowrap; }
.history { background: #d6d6d6; padding: 5px 2px 0; height: 26px; line-height: 10px; border-bottom: 1px solid #8d9298; }
.history p { margin: 0; }
.entry { display: flex; align-items: center; height: 13px; background: #fff; }
.entry svg { width: 22px; height: 12px; margin-right: 2px; }
.entry a { background: #e9e9ec; }
.entry em { font-style: normal; color: #3b23c8; }
.entry input { flex: 1; min-width: 0; outline: 0; }

/* status bar */
.status { display: flex; justify-content: space-between; height: 20px; background: #232e39; border-bottom: 1px solid #56616d; }
.layouts { display: flex; gap: 1px; padding: 0 0 0 8px; line-height: 13px; }
.layouts a { height: 14px; padding: 0 7px; background: #323f4c; border-radius: 0 0 6px 6px; }
.layouts .on { background: #4a5664; color: #fff; font-weight: bold; }
.layouts .add { background: none; font-weight: bold; font-size: 10px; }
.toggles { display: flex; padding: 1px 0 2px; }
.toggles > * { width: 16px; background: #384554; display: flex; align-items: center; justify-content: center; white-space: nowrap; }
.toggles .cell { width: 10px; }
.toggles .wide { width: 18px; border-right: 1px solid #232e39; }
.toggles .hl { background: #528dc1; }
.toggles .ratio { width: 14px; }
.toggles svg { width: 12px; height: 12px; }
.txt { color: #fff; font-weight: bold; }

/* desktop taskbar */
.taskbar { display: flex; align-items: stretch; height: 26px; background: linear-gradient(#8a9db8, #95a9c6 25%, #8fa4c2); border-top: 1px solid #a9b8cc; }
.start { width: 36px; }
.start svg { width: 24px; height: 24px; margin: 0 auto 0 6px; }
.task { display: flex; align-items: center; gap: 3px; width: 103px; margin-left: 3px; padding-left: 7px; border: 1px solid #c9d5e2; border-radius: 2px; background: linear-gradient(#a8b8cb, #93a7bf); color: #f7f9fb; white-space: nowrap; }
.task + .task { margin-left: 2px; }
.task.on { background: linear-gradient(120deg, #b0bfd0, #bccad9); }
.task svg { width: 20px; height: 20px; }
.tray { display: flex; align-items: center; margin-left: auto; gap: 5px; color: #fff; }
.tray svg { width: 11px; height: 11px; }
.lang { font-size: 6px; margin-right: 7px; }
.up { border: 2px solid transparent; border-bottom-color: #fff; border-top: 0; margin-right: 4px; }
time { display: flex; flex-direction: column; text-align: center; line-height: 11px; width: 44px; }
.peek { align-self: stretch; width: 8px; background: linear-gradient(#5f7388, #7f94ab); border: 1px solid #b5c3d3; }

/* school emblem */
.badge { position: absolute; right: 20px; top: 13px; width: 39px; height: 39px; }
.badge text { text-anchor: middle; fill: #4a9a35; }
.cn { font-size: 5px; }
.en { font-size: 3px; font-weight: bold; }
```
